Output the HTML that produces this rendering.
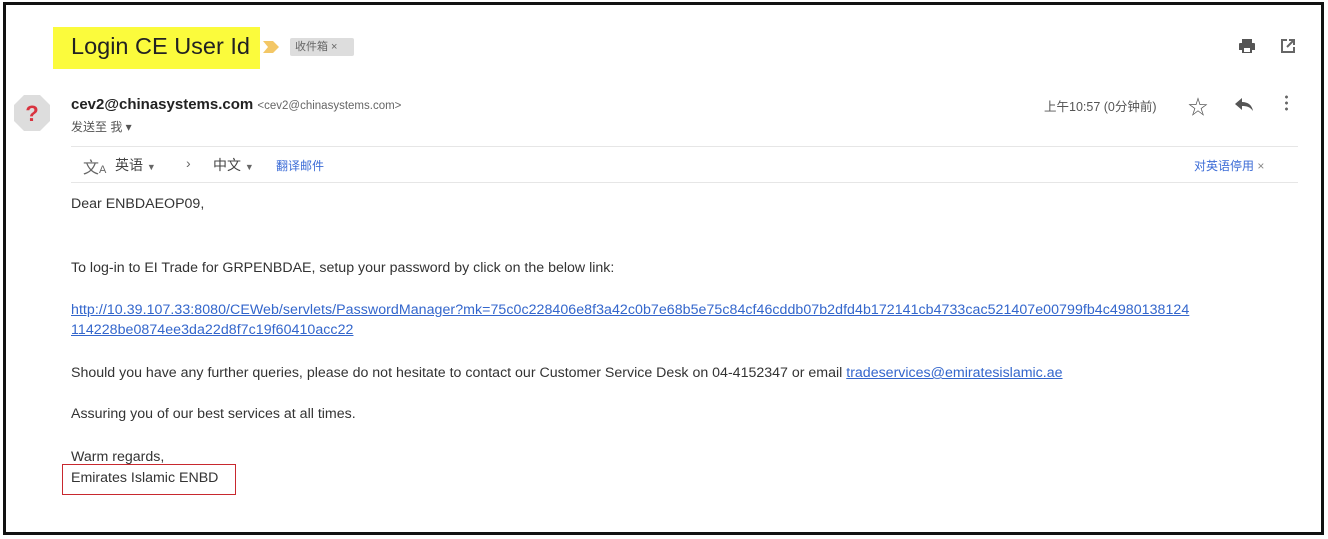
<!DOCTYPE html>
<html><head><meta charset="utf-8"><style>
body{margin:0;width:1328px;height:539px;background:#fff;position:relative;overflow:hidden;font-family:"Liberation Sans","Noto Sans CJK SC",sans-serif;color:#222}
.frame{position:absolute;left:3px;top:2px;width:1315px;height:527px;border:3px solid #111}
.a{position:absolute;white-space:nowrap}
.t{font-size:14.2px;color:#333}
a{color:#3366cc;text-decoration:underline}
.ic{position:absolute}
</style></head><body>
<div class="frame"></div>
<div class="a" style="left:53px;top:27px;width:207px;height:42px;background:#fbfb3c"></div>
<div class="a" style="left:71px;top:33px;font-size:23.5px;color:#222">Login CE User Id</div>
<svg class="ic" style="left:263px;top:40px" width="18" height="14"><path d="M0 1h10l6 6-6 6H0l5-6z" fill="#f3c766"/></svg>
<div class="a" style="left:290px;top:38px;width:64px;height:18px;background:#ddd;border-radius:2px;font-size:11px;color:#666;line-height:18px;padding-left:5px;box-sizing:border-box">收件箱 ×</div>
<svg class="ic" style="left:1238px;top:37px" width="18" height="18"><path d="M4 2h10v4H4z M2 6h14a1 1 0 0 1 1 1v6h-3v3H4v-3H1V7a1 1 0 0 1 1-1z" fill="#555"/><rect x="6" y="11" width="6" height="4" fill="#fff"/></svg>
<svg class="ic" style="left:1279px;top:37px" width="18" height="18" fill="none" stroke="#666" stroke-width="2"><path d="M8 3H3v12h12v-5M10 3h5v5M15 3l-7 7"/></svg>
<svg class="ic" style="left:12px;top:93px" width="40" height="40"><polygon points="12,2 28,2 38,12 38,28 28,38 12,38 2,28 2,12" fill="#ddd"/><text x="20" y="28" text-anchor="middle" font-size="22" font-weight="bold" fill="#d9333f" font-family="Liberation Sans">?</text></svg>
<div class="a" style="left:71px;top:96px;font-size:15px;font-weight:bold;color:#222">cev2@chinasystems.com <span style="font-weight:normal;font-size:11.5px;color:#666">&lt;cev2@chinasystems.com&gt;</span></div>
<div class="a" style="left:71px;top:118px;font-size:12px;color:#555">发送至 我 ▾</div>
<div class="a" style="left:1044px;top:96px;font-size:12.5px;color:#555">上午10:57 (0分钟前)</div>
<div class="a" style="left:1188px;top:91px;font-size:20px;color:#555">☆</div>
<svg class="ic" style="left:1234px;top:96px" width="20" height="16"><path d="M8 2L1 8l7 6V10c5 0 8 1 11 5-1-6-5-9-11-9z" fill="#555"/></svg>
<div class="a" style="left:1285px;top:94px;width:3px;height:18px;background:radial-gradient(circle,#666 1.3px,transparent 1.6px) 0 0/3px 6px"></div>
<div class="a" style="left:71px;top:146px;width:1227px;height:1px;background:#e6e6e6"></div>
<div class="a" style="left:71px;top:182px;width:1227px;height:1px;background:#e6e6e6"></div>
<div class="a" style="left:83px;top:154px;font-size:16px;color:#666">文<span style="font-size:11px">A</span></div>
<div class="a" style="left:115px;top:155px;font-size:14px;color:#444">英语 <span style="font-size:9px;color:#666">▼</span></div>
<div class="a" style="left:186px;top:155px;font-size:14px;color:#666">›</div>
<div class="a" style="left:213px;top:155px;font-size:14px;color:#444">中文 <span style="font-size:9px;color:#666">▼</span></div>
<div class="a" style="left:276px;top:157px;font-size:12px;color:#3b6bd6">翻译邮件</div>
<div class="a" style="left:1194px;top:157px;font-size:12px;color:#3b6bd6">对英语停用 <span style="color:#888">×</span></div>
<div class="a t" style="left:71px;top:196px">Dear ENBDAEOP09,</div>
<div class="a t" style="left:71px;top:260px">To log-in to EI Trade for GRPENBDAE, setup your password by click on the below link:</div>
<div class="a t" style="left:71px;top:302px;letter-spacing:0.05px"><a>http://10.39.107.33:8080/CEWeb/servlets/PasswordManager?mk=75c0c228406e8f3a42c0b7e68b5e75c84cf46cddb07b2dfd4b172141cb4733cac521407e00799fb4c4980138124</a></div>
<div class="a t" style="left:71px;top:322px;letter-spacing:0.05px"><a>114228be0874ee3da22d8f7c19f60410acc22</a></div>
<div class="a t" style="left:71px;top:365px">Should you have any further queries, please do not hesitate to contact our Customer Service Desk on 04-4152347 or email <a>tradeservices@emiratesislamic.ae</a></div>
<div class="a t" style="left:71px;top:406px">Assuring you of our best services at all times.</div>
<div class="a t" style="left:71px;top:449px">Warm regards,</div>
<div class="a t" style="left:71px;top:470px">Emirates Islamic ENBD</div>
<div class="a" style="left:62px;top:464px;width:174px;height:31px;border:1.5px solid #c8282e;box-sizing:border-box"></div>
</body></html>
